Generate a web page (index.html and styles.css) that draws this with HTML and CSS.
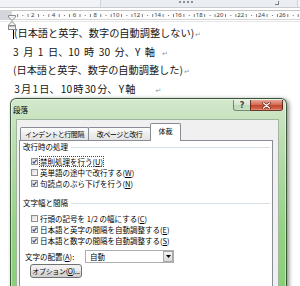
FILE: index.html
```html
<!DOCTYPE html>
<html>
<head>
    <title>段落</title>
    <link rel="stylesheet" href="styles.css">
</head>
<body>
    <div class="toolbar">
        <div class="group-label">
            <span class="group-name"></span>
            <span class="launcher"></span>
        </div>
    </div>

    <div class="ruler">
        <div class="ruler-margin"></div>
        <div class="ruler-scale">
            <span>2</span><span>4</span><span>6</span><span>8</span><span>10</span><span>12</span><span>14</span>
            <span>16</span><span>18</span><span>20</span><span>22</span><span>24</span><span>26</span>
        </div>
        <svg class="indent-marker" width="8" height="15" viewBox="0 0 8 15">
            <path d="M0.5 0.5 H7.5 V2 L4 5.5 L0.5 2 Z" fill="#f2f2f2" stroke="#8a8a8a"/>
            <path d="M4 6.5 L7.5 10 V10.5 H0.5 V10 Z" fill="#f2f2f2" stroke="#8a8a8a"/>
            <rect x="0.5" y="11" width="7" height="3.5" fill="#f2f2f2" stroke="#8a8a8a"/>
        </svg>
    </div>

    <div class="page">
        <p class="line"><span class="caret"></span>(日本語と英字、数字の自動調整しない)<span class="ret">↵</span></p>
        <p class="line spaced">3 月 1 日、10 時 30 分、Y 軸<span class="ret near">↵</span></p>
        <p class="line">(日本語と英字、数字の自動調整した)<span class="ret">↵</span></p>
        <p class="line"><span class="ha">3</span>月<span class="ha">1</span>日、<span class="ha">10</span>時<span class="ha">30</span>分、<span class="ha">Y</span>軸<span class="ret far">↵</span></p>
    </div>

    <div class="dialog">
        <div class="titlebar">
            <span class="title">段落</span>
            <div class="caption-buttons">
                <span class="cap-btn help">?</span>
                <span class="cap-btn close">
                    <svg width="9" height="7" viewBox="0 0 9 7">
                        <path d="M1.5 1 L7.5 6 M7.5 1 L1.5 6" stroke="#6a2216" stroke-width="2.6" stroke-linecap="round"/>
                        <path d="M1.5 1 L7.5 6 M7.5 1 L1.5 6" stroke="#fff" stroke-width="1.3" stroke-linecap="round"/>
                    </svg>
                </span>
            </div>
        </div>

        <div class="client">
            <div class="tabs">
                <span class="tab tab-indent">インデントと行間隔</span>
                <span class="tab tab-break">改ページと改行</span>
                <span class="tab tab-active">体裁</span>
            </div>

            <div class="panel">
                <div class="group">
                    <div class="group-head">改行時の処理</div>
                    <div class="check-list">
                        <div class="check">
                            <span class="box checked"><svg width="5" height="5" viewBox="0 0 5 5"><path d="M0.6 2.6 L2 4 L4.5 0.8" fill="none" stroke="#3b4f8a" stroke-width="1.2"/></svg></span>
                            <span class="focus">禁則処理を行う(<u>U</u>)</span>
                        </div>
                        <div class="check">
                            <span class="box"></span>
                            <span>英単語の途中で改行する(<u>W</u>)</span>
                        </div>
                        <div class="check">
                            <span class="box checked"><svg width="5" height="5" viewBox="0 0 5 5"><path d="M0.6 2.6 L2 4 L4.5 0.8" fill="none" stroke="#3b4f8a" stroke-width="1.2"/></svg></span>
                            <span>句読点のぶら下げを行う(<u>N</u>)</span>
                        </div>
                    </div>
                </div>

                <div class="group second">
                    <div class="group-head">文字幅と間隔</div>
                    <div class="check-list">
                        <div class="check">
                            <span class="box"></span>
                            <span>行頭の記号を 1/2 の幅にする(<u>C</u>)</span>
                        </div>
                        <div class="check">
                            <span class="box checked"><svg width="5" height="5" viewBox="0 0 5 5"><path d="M0.6 2.6 L2 4 L4.5 0.8" fill="none" stroke="#3b4f8a" stroke-width="1.2"/></svg></span>
                            <span>日本語と英字の間隔を自動調整する(<u>E</u>)</span>
                        </div>
                        <div class="check">
                            <span class="box checked"><svg width="5" height="5" viewBox="0 0 5 5"><path d="M0.6 2.6 L2 4 L4.5 0.8" fill="none" stroke="#3b4f8a" stroke-width="1.2"/></svg></span>
                            <span>日本語と数字の間隔を自動調整する(<u>S</u>)</span>
                        </div>
                    </div>
                </div>

                <div class="align-row">
                    <span class="align-label">文字の配置(<u>A</u>):</span>
                    <div class="combo">
                        <span>自動</span>
                        <span class="combo-arrow"><svg width="5" height="3" viewBox="0 0 5 3"><path d="M0 0 H5 L2.5 3 Z" fill="#000"/></svg></span>
                    </div>
                </div>

                <div class="options-btn">オプション(<u>O</u>)...</div>
            </div>
        </div>
    </div>
</body>
</html>
```

FILE: styles.css
```css
html,
body {
    margin: 0;
    overflow: hidden;
}

body {
    position: relative;
    width: 300px;
    height: 286px;
    background: #fff;
    font-family: "Noto Sans CJK JP", sans-serif;
}

/* ribbon bottom edge */
.toolbar {
    display: flex;
    height: 7px;
    background: #f1f3f6;
    border-bottom: 1px solid #c9cdd3;
}

.group-label {
    display: flex;
    margin-left: 100px;
    width: 196px;
    border-left: 1px solid #cfd3d9;
    border-right: 1px solid #cfd3d9;
    background: #eaedf1;
    overflow: hidden;
}

/* bottom of the clipped group caption */
.group-name {
    margin: 1px 0 0 78px;
    width: 15px;
    height: 2px;
    background: repeating-linear-gradient(to right, #8a8f98 0 2px, transparent 2px 4px);
}

.launcher {
    margin: 1px 18px 0 auto;
    width: 3px;
    height: 3px;
    border-right: 1px solid #7a7f88;
    border-bottom: 1px solid #7a7f88;
}

/* ruler */
.ruler {
    position: relative;
    display: flex;
    box-sizing: border-box;
    height: 14px;
    padding-top: 2px;
    border-bottom: 1px solid #e6e6e6;
    background-image: linear-gradient(to right, #a0a0a0 0 1px, transparent 1px);
    background-size: 10.4px 1px;
    background-repeat: repeat-x;
    background-position: 17px 11px;
}

.ruler-margin {
    width: 12px;
    height: 10px;
    background: #d3d6da;
}

.ruler-scale {
    display: flex;
    flex: 1;
    box-sizing: border-box;
    height: 10px;
    padding-left: 10.4px;
    border-top: 1px solid #c6c6c6;
    border-bottom: 1px solid #d6d6d6;
    background-color: #fcfcfc;
    background-image:
        linear-gradient(to right, #7a7a7a 0 1px, transparent 1px),
        linear-gradient(to right, #7a7a7a 0 1px, transparent 1px);
    background-size: 10.4px 3px, 20.8px 1px;
    background-repeat: repeat-x;
    background-position: 5.2px 2.5px, 10.4px 3.5px;
}

.ruler-scale span {
    flex: none;
    width: 20.8px;
    text-align: center;
    font-family: "Noto Sans", sans-serif;
    font-size: 6px;
    line-height: 8px;
    color: #3b3b3b;
}

.indent-marker {
    position: absolute;
    left: 8px;
    top: 7px;
}

/* document */
.page {
    padding: 3px 0 0 13px;
    font-size: 10.2px;
    line-height: 16.5px;
    color: #151515;
}

.line {
    margin: 0;
    white-space: pre;
}

.spaced {
    word-spacing: 2.2px;
}

.ha {
    margin: 0 1.2px;
}

.caret {
    display: inline-block;
    width: 1px;
    height: 12px;
    margin-right: 0;
    background: #000;
    vertical-align: -2px;
}

.ret {
    margin-left: 1px;
    font-family: "DejaVu Sans", sans-serif;
    font-size: 7px;
    color: #8a99b2;
}

.ret.near {
    margin-left: 7px;
}

.ret.far {
    margin-left: 20px;
}

/* dialog window */
.dialog {
    position: absolute;
    left: 10px;
    top: 98px;
    display: flex;
    flex-direction: column;
    box-sizing: border-box;
    width: 277px;
    height: 200px;
    border: 1px solid rgba(35, 55, 35, 0.8);
    border-radius: 6px 6px 0 0;
    background: linear-gradient(to bottom, #d4e9cd 0, #c7e3bf 20px, #b4dba9 60px, #93d383 130px, #86cf75 200px);
    box-shadow: inset 0 0 0 1px rgba(255, 255, 255, 0.45), 2px 1px 4px rgba(0, 0, 0, 0.45);
    font-family: "Noto Sans CJK JP", sans-serif;
    color: #000;
}

.titlebar {
    display: flex;
    height: 20px;
    padding: 0 3px 0 2px;
}

.title {
    padding-top: 2px;
    font-size: 7.5px;
    line-height: 18px;
}

.caption-buttons {
    display: flex;
    margin-left: auto;
    margin-top: 1px;
    height: 11px;
}

.cap-btn {
    display: flex;
    align-items: center;
    justify-content: center;
    box-sizing: border-box;
    height: 11px;
}

.help {
    width: 17px;
    border: 1px solid rgba(50, 70, 50, 0.6);
    border-top: none;
    border-right: none;
    border-radius: 0 0 0 3px;
    background: linear-gradient(#e6f0e3, #d2e5cd 50%, #bfd9b8 50%, #cae2c3);
    font-family: "DejaVu Sans", sans-serif;
    font-size: 8px;
    font-weight: bold;
    color: #3b453d;
}

.close {
    width: 33px;
    border: 1px solid rgba(70, 20, 15, 0.75);
    border-top: none;
    border-radius: 0 0 3px 0;
    background: linear-gradient(#e9a695, #d4705a 45%, #c2432b 50%, #cf6248 85%, #e59a7d);
}

.client {
    display: flex;
    flex: 1;
    flex-direction: column;
    margin: 0 7px 0 5px;
    padding: 3px 5px 0 2px;
    border: 1px solid #a2b59f;
    border-bottom: none;
    background: #f0f0f0;
}

/* tabs */
.tabs {
    display: flex;
    align-items: flex-end;
    height: 17px;
    padding-left: 1px;
}

.tab {
    box-sizing: border-box;
    height: 13px;
    border: 1px solid #898c95;
    border-bottom: none;
    border-radius: 2px 2px 0 0;
    background: linear-gradient(#fdfdfd, #eeeeee 50%, #e3e3e3);
    font-size: 7px;
    line-height: 12px;
    letter-spacing: -0.45px;
    text-align: center;
}

.tab + .tab {
    margin-left: -1px;
}

.tab-indent {
    width: 69px;
}

.tab-break {
    width: 63px;
}

.tab-active {
    position: relative;
    z-index: 1;
    width: 31px;
    height: 18px;
    margin-bottom: -1px;
    background: #fff;
    line-height: 14px;
    letter-spacing: 0;
}

.panel {
    flex: 1;
    padding: 1px 2px 0 3px;
    border: 1px solid #898c95;
    background: #fff;
    font-size: 7.5px;
}

.group-head {
    display: flex;
    align-items: center;
    gap: 3px;
    height: 10px;
    line-height: 10px;
}

.group-head::after {
    content: "";
    flex: 1;
    height: 1px;
    background: #d5dfe5;
}

.group.second {
    margin-top: 9px;
}

.check-list {
    display: flex;
    flex-direction: column;
    margin: 4px 0 0 8px;
}

.group.second .check-list {
    margin-top: 5px;
}

.check {
    display: flex;
    align-items: center;
    gap: 2px;
    height: 11px;
    line-height: 9px;
    white-space: nowrap;
}

.box {
    display: flex;
    align-items: center;
    justify-content: center;
    box-sizing: border-box;
    width: 7px;
    height: 7px;
    border: 1px solid #8f8f8f;
    background: linear-gradient(135deg, #dcdcdc, #fbfbfb);
}

.focus {
    outline: 1px dotted #444;
}

.align-row {
    display: flex;
    align-items: center;
    height: 13px;
    margin: 4px 0 0 2px;
}

.align-label {
    width: 60px;
}

.combo {
    display: flex;
    align-items: center;
    box-sizing: border-box;
    width: 89px;
    height: 13px;
    padding-left: 4px;
    border: 1px solid #abadb3;
    background: #fff;
}

.combo-arrow {
    display: flex;
    align-items: center;
    justify-content: center;
    box-sizing: border-box;
    width: 10px;
    height: 11px;
    margin-left: auto;
    border: 1px solid #a8a8a8;
    background: linear-gradient(#f4f4f4, #d9d9d9);
}

.options-btn {
    display: flex;
    align-items: center;
    justify-content: center;
    box-sizing: border-box;
    width: 52px;
    height: 14px;
    margin: 1px 0 0 7px;
    border: 1px solid #707070;
    border-radius: 3px;
    background: linear-gradient(#f2f2f2, #ebebeb 50%, #dddddd 50%, #cfcfcf);
    font-size: 7px;
    letter-spacing: -0.3px;
}
```
